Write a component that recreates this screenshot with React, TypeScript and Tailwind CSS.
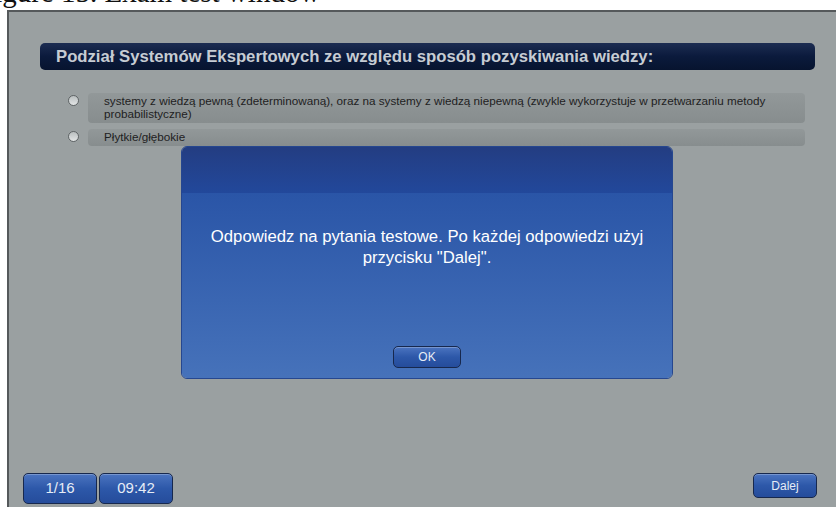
import React from 'react'

const font = { fontFamily: '"Liberation Sans", Arial, sans-serif' }

function Radio() {
  return (
    <span className="mt-[2px] ml-[28px] mr-[9px] h-[11px] w-[11px] flex-shrink-0 rounded-full border border-[#5f6466] bg-gradient-to-b from-[#b9bebf] to-[#e3e6e6]" />
  )
}

function Option({ text }: { text: string }) {
  return (
    <div className="flex items-start">
      <Radio />
      <div className="w-[725px] rounded-[4px] bg-gradient-to-b from-[#929899] to-[#878d8e] pl-[16px] pr-4 pt-[1px] pb-[3px] text-[11.7px] leading-[13px] text-[#1e2122]">
        {text}
      </div>
    </div>
  )
}

function BlueButton({ children, className }: { children: React.ReactNode; className: string }) {
  return (
    <button
      className={`flex items-center justify-center rounded-[5px] border border-[#17284d] bg-gradient-to-b from-[#4b74c0] via-[#2d58a9] to-[#254c9b] text-[#e6ecf6] shadow-[inset_0_1px_0_rgba(255,255,255,0.25)] ${className}`}
    >
      {children}
    </button>
  )
}

export default function App() {
  return (
    <div className="relative h-[507px] w-[836px] overflow-hidden bg-white" style={font}>
      {/* caption strip above the exam window */}
      <div className="h-[10px] overflow-hidden">
        <p
          className="-ml-[22px] -mt-[22px] whitespace-nowrap text-[29px] leading-[29px] text-[#111]"
          style={{ fontFamily: '"Liberation Serif", "Times New Roman", serif' }}
        >
          Figure 15. Exam test window
        </p>
      </div>

      {/* exam window */}
      <div className="ml-[7px] flex h-[510px] w-[829px] flex-col border-l-2 border-t-2 border-[#55595b] bg-[#9aa0a1]">
        <div className="px-[31px] pt-[31px]">
          <div className="flex h-[27px] w-[775px] items-center rounded-[5px] bg-gradient-to-b from-[#1d2d52] via-[#0b1a3c] to-[#07142f] pl-[16px] text-[16.7px] font-bold text-[#c6ccd3]">
            Podział Systemów Ekspertowych ze względu sposób pozyskiwania wiedzy:
          </div>

          <div className="mt-[23px] flex flex-col gap-[6px]">
            <Option text="systemy z wiedzą pewną (zdeterminowaną), oraz na systemy z wiedzą niepewną (zwykle wykorzystuje w przetwarzaniu metody probabilistyczne)" />
            <Option text="Płytkie/głębokie" />
          </div>
        </div>

        {/* footer: question counter, timer, next */}
        <div className="mt-auto flex items-start justify-between pb-[16px] pl-[14px] pr-[19px]">
          <div className="flex gap-[2px]">
            <BlueButton className="h-[31px] w-[74px] text-[15px]">1/16</BlueButton>
            <BlueButton className="h-[31px] w-[74px] text-[15px]">09:42</BlueButton>
          </div>
          <BlueButton className="h-[25px] w-[64px] text-[12px]">Dalej</BlueButton>
        </div>
      </div>

      {/* info dialog */}
      <div className="absolute left-[181px] top-[146px] flex h-[233px] w-[492px] flex-col overflow-hidden rounded-[6px] border border-[#26478f]">
        <div className="h-[46px] shrink-0 bg-gradient-to-b from-[#233d82] to-[#22489b]" />
        <div className="flex flex-1 flex-col items-center bg-gradient-to-b from-[#2a55a7] to-[#4672ba]">
          <p className="mt-[33px] w-[470px] text-center text-[16.7px] leading-[21px] text-white">
            Odpowiedz na pytania testowe. Po każdej odpowiedzi użyj przycisku "Dalej".
          </p>
          <BlueButton className="mt-[78px] h-[22px] w-[68px] shrink-0 text-[12px]">OK</BlueButton>
        </div>
      </div>
    </div>
  )
}
